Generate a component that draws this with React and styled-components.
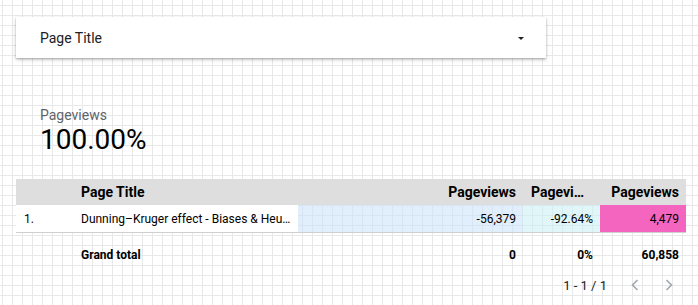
import React from "react";
import styled, { createGlobalStyle } from "styled-components";

const GlobalStyle = createGlobalStyle`
  html, body {
    margin: 0;
    padding: 0;
  }
  body {
    font-family: Roboto, "Liberation Sans", sans-serif;
    color: #000;
    background-color: #fff;
    background-image:
      linear-gradient(to right, #e8e8e8 1px, transparent 1px),
      linear-gradient(to bottom, #e8e8e8 1px, transparent 1px);
    background-size: 10px 10px;
    background-position: 2px 5px;
    min-height: 305px;
  }
`;

const rows = [
  {
    id: 1,
    title: "Dunning–Kruger effect - Biases & Heuristics | The Decision Lab",
    change: "-56,379",
    pct: "-92.64%",
    views: "4,479",
  },
];

const Page = styled.div`
  padding: 17px 0 0 16px;
  width: 670px;
`;

const Dropdown = styled.div`
  width: 530px;
  height: 41px;
  box-sizing: border-box;
  background: #fff;
  box-shadow: 0 1px 2px rgba(0, 0, 0, 0.25), 0 2px 4px rgba(0, 0, 0, 0.15);
  display: flex;
  align-items: center;
  justify-content: space-between;
  padding: 0 22px 0 24px;
  font-size: 14px;
  color: #202124;
`;

const Caret = styled.span`
  width: 0;
  height: 0;
  border-left: 3px solid transparent;
  border-right: 3px solid transparent;
  border-top: 3px solid #202124;
  margin-top: 1px;
`;

const Scorecard = styled.div`
  margin: 49px 0 0 24px;
`;

const ScoreLabel = styled.div`
  font-size: 14px;
  line-height: 16px;
  color: #5f6368;
`;

const ScoreValue = styled.div`
  font-size: 28px;
  line-height: 32px;
  margin-top: 1px;
`;

const Table = styled.div`
  margin-top: 23px;
  display: grid;
  grid-template-columns: 57px 225px 225px 77px 86px;
  font-size: 12px;
`;

const HeadCell = styled.div`
  background: #dedede;
  height: 26px;
  display: flex;
  align-items: center;
  justify-content: ${(p) => (p.$right ? "flex-end" : "flex-start")};
  padding: 0 ${(p) => p.$pr || (p.$right ? "7px" : "8px")} 0 8px;
  font-size: 14px;
  font-weight: 700;
  white-space: nowrap;
  overflow: hidden;
  min-width: 0;
`;

const HeadText = styled.span`
  overflow: hidden;
  text-overflow: ellipsis;
`;

const Cell = styled.div`
  height: 27px;
  border-bottom: 1px solid #cfcfcf;
  display: flex;
  align-items: center;
  justify-content: ${(p) => (p.$right ? "flex-end" : "flex-start")};
  padding: 0 ${(p) => p.$pr || (p.$right ? "7px" : "8px")} 0 8px;
  background: ${(p) => p.$bg || "#fff"};
  white-space: nowrap;
  overflow: hidden;
  min-width: 0;
`;

const Ellipsis = styled.span`
  overflow: hidden;
  text-overflow: ellipsis;
`;

const TotalCell = styled.div`
  height: 42px;
  display: flex;
  align-items: center;
  justify-content: ${(p) => (p.$right ? "flex-end" : "flex-start")};
  padding: 0 ${(p) => (p.$right ? "7px" : "8px")} 0 8px;
  font-weight: 700;
  margin-top: 1px;
`;

const Pager = styled.div`
  display: flex;
  justify-content: flex-end;
  align-items: center;
  height: 18px;
  font-size: 13px;
  color: #202124;
`;

const PagerText = styled.span`
  margin-right: 11px;
`;

const PagerButton = styled.button`
  border: 0;
  background: transparent;
  padding: 0;
  width: 34px;
  height: 18px;
  display: flex;
  align-items: center;
  justify-content: center;
  color: #a0a6ad;
`;

const Chevron = ({ left }) => (
  <svg width="8" height="12" viewBox="0 0 8 12">
    <polyline
      points={left ? "6.5,1 1.5,6 6.5,11" : "1.5,1 6.5,6 1.5,11"}
      fill="none"
      stroke="currentColor"
      strokeWidth="1.6"
    />
  </svg>
);

export default function App() {
  return (
    <>
      <GlobalStyle />
      <Page>
        <Dropdown>
          <span>Page Title</span>
          <Caret />
        </Dropdown>

        <Scorecard>
          <ScoreLabel>Pageviews</ScoreLabel>
          <ScoreValue>100.00%</ScoreValue>
        </Scorecard>

        <Table>
          <HeadCell />
          <HeadCell>Page Title</HeadCell>
          <HeadCell $right>Pageviews</HeadCell>
          <HeadCell $right $pr="14px">
            <HeadText>Pageviews</HeadText>
          </HeadCell>
          <HeadCell $right>Pageviews</HeadCell>

          {rows.map((row) => (
            <React.Fragment key={row.id}>
              <Cell>{row.id}.</Cell>
              <Cell $pr="6px">
                <Ellipsis>{row.title}</Ellipsis>
              </Cell>
              <Cell $right $bg="rgba(200, 225, 250, 0.55)">
                {row.change}
              </Cell>
              <Cell $right $bg="rgba(200, 238, 242, 0.55)">
                {row.pct}
              </Cell>
              <Cell $right $bg="rgba(244, 96, 190, 0.97)">
                {row.views}
              </Cell>
            </React.Fragment>
          ))}

          <TotalCell />
          <TotalCell>Grand total</TotalCell>
          <TotalCell $right>0</TotalCell>
          <TotalCell $right>0%</TotalCell>
          <TotalCell $right>60,858</TotalCell>
        </Table>

        <Pager>
          <PagerText>1 - 1 / 1</PagerText>
          <PagerButton>
            <Chevron left />
          </PagerButton>
          <PagerButton>
            <Chevron />
          </PagerButton>
        </Pager>
      </Page>
    </>
  );
}
